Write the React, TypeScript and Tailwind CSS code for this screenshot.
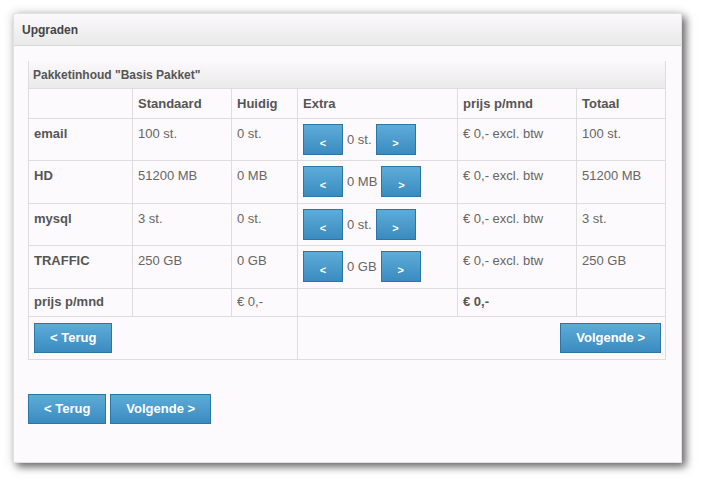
import React from 'react';

type Row = {
  name: string;
  standaard: string;
  huidig: string;
  extra: string;
  prijs: string;
  totaal: string;
  tall?: boolean;
};

const rows: Row[] = [
  { name: 'email', standaard: '100 st.', huidig: '0 st.', extra: '0 st.', prijs: '€ 0,- excl. btw', totaal: '100 st.' },
  { name: 'HD', standaard: '51200 MB', huidig: '0 MB', extra: '0 MB', prijs: '€ 0,- excl. btw', totaal: '51200 MB', tall: true },
  { name: 'mysql', standaard: '3 st.', huidig: '0 st.', extra: '0 st.', prijs: '€ 0,- excl. btw', totaal: '3 st.' },
  { name: 'TRAFFIC', standaard: '250 GB', huidig: '0 GB', extra: '0 GB', prijs: '€ 0,- excl. btw', totaal: '250 GB', tall: true },
];

const btn =
  'bg-gradient-to-b from-[#5dacd8] to-[#3a8bc0] border border-[#2d75a4] text-white font-bold';

const SmallButton: React.FC<{ label: string }> = ({ label }) => (
  <button className={`${btn} w-[40px] h-[31px] flex justify-center items-start pt-[12px] text-[11px] leading-[13px]`}>
    {label}
  </button>
);

const BigButton: React.FC<{ label: string }> = ({ label }) => (
  <button className={`${btn} h-[30px] px-[15px] text-[13px] leading-[16px]`}>{label}</button>
);

const cell = 'border-r border-b border-[#dddddd] px-[5px] align-top';
const lastCell = 'border-b border-[#dddddd] px-[5px] align-top';

export default function App() {
  return (
    <div className="min-h-[483px] bg-white pt-[13px] pl-[13px] font-['Liberation_Sans',Arial,sans-serif]">
      <div className="w-[669px] h-[450px] bg-[#fdfafd] border border-[#e2e2e2] shadow-[4px_4px_8px_rgba(0,0,0,0.55),0_0_10px_rgba(0,0,0,0.15)]">
        <div className="h-[32px] flex items-center pl-[8px] border-b border-[#d9d9d9] bg-gradient-to-b from-[#fcf9fc] to-[#e9e9e9] text-[12px] font-bold text-[#444]">
          Upgraden
        </div>

        <div className="pl-[14px] pt-[15px]">
          <div className="w-[638px] border-l border-r border-b border-[#dddddd]">
            <div className="h-[28px] flex items-center pl-[4px] border-b border-[#dddddd] bg-gradient-to-b from-[#fcf9fc] to-[#eaeaea] text-[12px] font-bold text-[#555]">
              Pakketinhoud "Basis Pakket"
            </div>
            <table className="table-fixed border-separate border-spacing-0 w-[636px] text-[13px] text-[#666]">
              <colgroup>
                <col className="w-[104px]" />
                <col className="w-[99px]" />
                <col className="w-[66px]" />
                <col className="w-[160px]" />
                <col className="w-[119px]" />
                <col className="w-[88px]" />
              </colgroup>
              <thead>
                <tr className="text-left font-bold text-[#555] leading-[16px]">
                  <th className={`${cell} pt-[7px] pb-[6px]`}></th>
                  <th className={`${cell} pt-[7px] pb-[6px]`}>Standaard</th>
                  <th className={`${cell} pt-[7px] pb-[6px]`}>Huidig</th>
                  <th className={`${cell} pt-[7px] pb-[6px]`}>Extra</th>
                  <th className={`${cell} pt-[7px] pb-[6px]`}>prijs p/mnd</th>
                  <th className={`${lastCell} pt-[7px] pb-[6px]`}>Totaal</th>
                </tr>
              </thead>
              <tbody className="leading-[17px]">
                {rows.map((r) => (
                  <tr key={r.name}>
                    <td className={`${cell} pt-[6px] font-bold text-[#555]`}>{r.name}</td>
                    <td className={`${cell} pt-[6px]`}>{r.standaard}</td>
                    <td className={`${cell} pt-[6px]`}>{r.huidig}</td>
                    <td className={`${cell} pt-[5px] ${r.tall ? 'pb-[6px]' : 'pb-[5px]'}`}>
                      <div className="flex items-center gap-[4px]">
                        <SmallButton label="<" />
                        <span>{r.extra}</span>
                        <SmallButton label=">" />
                      </div>
                    </td>
                    <td className={`${cell} pt-[6px]`}>{r.prijs}</td>
                    <td className={`${lastCell} pt-[6px]`}>{r.totaal}</td>
                  </tr>
                ))}
                <tr className="leading-[16px]">
                  <td className={`${cell} pt-[5px] pb-[6px] font-bold text-[#555]`}>prijs p/mnd</td>
                  <td className={`${cell} pt-[5px] pb-[6px]`}></td>
                  <td className={`${cell} pt-[5px] pb-[6px]`}>€ 0,-</td>
                  <td className={`${cell} pt-[5px] pb-[6px]`}></td>
                  <td className={`${cell} pt-[5px] pb-[6px] font-bold text-[#555]`}>€ 0,-</td>
                  <td className={`${lastCell} pt-[5px] pb-[6px]`}></td>
                </tr>
                <tr>
                  <td colSpan={3} className="border-r border-[#dddddd] px-[5px] py-[6px]">
                    <BigButton label="< Terug" />
                  </td>
                  <td colSpan={3} className="px-[4px] py-[6px] text-right">
                    <BigButton label="Volgende >" />
                  </td>
                </tr>
              </tbody>
            </table>
          </div>

          <div className="flex gap-[4px] mt-[34px]">
            <BigButton label="< Terug" />
            <BigButton label="Volgende >" />
          </div>
        </div>
      </div>
    </div>
  );
}
